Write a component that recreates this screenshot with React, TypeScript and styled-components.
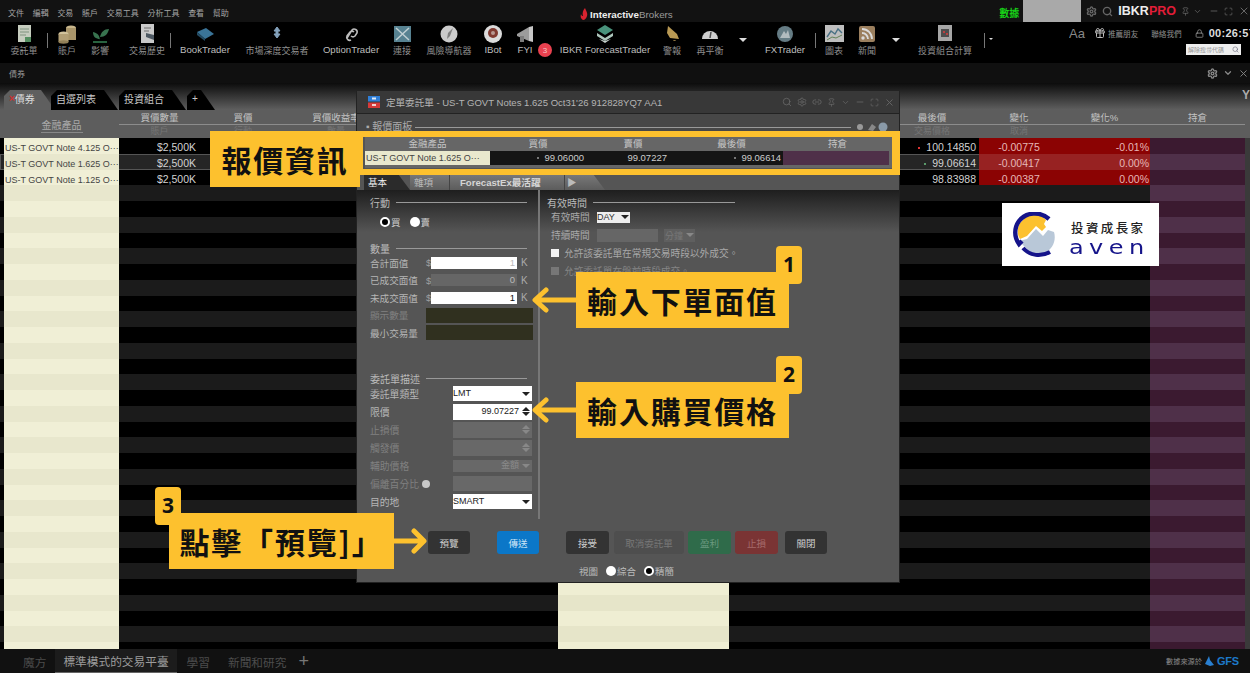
import React from "react";
import styled, { createGlobalStyle } from "styled-components";
import { ChevronDown, Gift, Link2, Lock, Maximize, Minus, Pin, Search, Settings, X } from "lucide-react";

const FONT = `"Liberation Sans", "Noto Sans CJK TC", sans-serif`;
const YELLOW = "#fdc12e";
const ROW_H = 15.75;
const ROW_COLS = "4px 115px 81px 358px 171px 171px 79px 86px 85px 95px 5px";

const Global = createGlobalStyle`
  html, body { margin: 0; padding: 0; background: #000; }
  * { box-sizing: border-box; }
`;

const Page = styled.div`
  position: relative; width: 1250px; height: 673px; overflow: hidden;
  display: flex; flex-direction: column; background: #000; color: #bbb;
  font-family: ${FONT}; font-size: 9px;
`;

/* ---------- top bar ---------- */
const TopBar = styled.header`
  height: 22px; flex: none; display: flex; align-items: center; background: #121212;
`;
const Menu = styled.nav`
  width: 580px; flex: none; display: flex; gap: 8.7px; padding-left: 8px; font-size: 8px; color: #a5a5a5; padding-top: 2px;
`;
const Brand = styled.div`
  display: flex; align-items: center; gap: 2px; font-size: 9.8px; padding-top: 6px; color: #9a9a9a;
  b { color: #eee; font-weight: 700; }
`;
const WinGroup = styled.div`
  margin-left: auto; height: 22px; display: flex; align-items: center; color: #666;
`;
const DataLabel = styled.span`
  color: #17d317; font-size: 10px; font-weight: 700; padding-top: 3px;
`;
const MaskBox = styled.div`
  width: 58px; height: 22px; background: #a9a9a9; margin: 0 5px 0 4px;
`;
const IbkrMark = styled.span`
  font-size: 12.5px; font-weight: 700; color: #eee; margin: 0 5px;
  i { font-style: normal; color: #e21d38; }
`;
const IconRow = styled.span<{ $gap: number; $ml?: number }>`
  display: inline-flex; align-items: center; gap: ${p => p.$gap}px; margin-left: ${p => p.$ml ?? 0}px;
`;

/* ---------- toolbar ---------- */
const ToolBar = styled.div`
  height: 41px; flex: none; display: flex; background: #000; position: relative;
`;
const Tool = styled.div<{ $w: number; $ml: number }>`
  width: ${p => p.$w}px; margin-left: ${p => p.$ml}px; flex: none;
  display: flex; flex-direction: column; align-items: center; height: 41px; padding-top: 2px;
`;
const ToolIcon = styled.div`
  height: 20px; display: flex; align-items: center; justify-content: center; filter: blur(.3px) brightness(.92);
`;
const ToolLabel = styled.span<{ $latin?: boolean }>`
  margin-top: ${p => (p.$latin ? 0 : 1)}px; white-space: nowrap; color: ${p => (p.$latin ? "#bdbdbd" : "#8f8f8f")};
  font-size: ${p => (p.$latin ? 9.6 : 9)}px; line-height: 12px;
`;
const ToolSep = styled.div<{ $ml: number }>`
  width: 1px; height: 15px; margin-left: ${p => p.$ml}px; margin-top: 11px; background: #777; flex: none;
`;
const Caret = styled.div<{ $ml: number; $s: number }>`
  margin-left: ${p => p.$ml}px; margin-top: 16px; flex: none; width: 0; height: 0;
  border-left: ${p => p.$s}px solid transparent; border-right: ${p => p.$s}px solid transparent;
  border-top: ${p => p.$s}px solid #ddd;
`;
const Badge = styled.div<{ $ml: number }>`
  width: 14px; height: 14px; border-radius: 50%; background: #e9414f; color: #f5c5c8; font-size: 8px; flex: none;
  display: flex; align-items: center; justify-content: center; margin-left: ${p => p.$ml}px; margin-top: 21px;
`;
const UserTools = styled.div`
  margin-left: auto; width: 181px; flex: none; display: flex; flex-direction: column; align-items: flex-start; overflow: hidden;
`;
const UserRow = styled.div`
  height: 22px; display: flex; align-items: center; white-space: nowrap; font-size: 7.6px; color: #8f8f8f;
`;
const AaMark = styled.span`
  font-size: 13px; color: #888; margin-right: 9px;
`;
const Clock = styled.span`
  font-size: 11px; font-weight: 700; color: #ddd; letter-spacing: .3px; margin-left: 5px;
`;
const Spaced = styled.span<{ $ml: number }>`
  margin-left: ${p => p.$ml}px; display: inline-flex; align-items: center;
`;
const SearchBox = styled.div`
  width: 55px; height: 11px; background: #eee; margin-left: 117px; margin-top: 0; display: flex; align-items: center;
  justify-content: space-between; padding: 0 2px; font-size: 6px; color: #999; overflow: hidden; white-space: nowrap;
`;

/* ---------- panel header ---------- */
const PanelBar = styled.div`
  height: 20px; flex: none; background: #101010; display: flex; align-items: center; padding: 0 1px 0 9px; color: #999; font-size: 8px;
  svg { color: #888; }
`;
const PanelTools = styled.div`
  margin-left: auto; display: flex; align-items: center; gap: 5px;
`;

/* ---------- tabs ---------- */
const TabStrip = styled.div`
  height: 27px; flex: none; display: flex; align-items: flex-end; padding-left: 4px; position: relative;
  background: linear-gradient(#0c0c0c 0%, #5f5f5f 100%);
`;
const Tab = styled.div<{ $w: number; $active?: boolean }>`
  width: ${p => p.$w}px; height: 20px; flex: none; margin-right: ${p => (p.$active ? -4 : 1)}px;
  background: ${p => (p.$active ? "#5f5f5f" : "#000")}; color: ${p => (p.$active ? "#ddd" : "#c8c8c8")};
  font-size: 10px; display: flex; align-items: center; padding-left: 5px; padding-bottom: 4px;
  clip-path: polygon(6px 0, calc(100% - 14px) 0, calc(100% - 9px) 35%, 100% 100%, 0 100%, 0 6px);
  b { color: #c33; font-size: 10px; font-weight: 700; }
`;
const CornerMark = styled.span`
  position: absolute; right: 0; top: 5px; font-size: 12px; font-weight: 700; color: #aaa;
`;

/* ---------- table ---------- */
const HeadGrid = styled.div`
  height: 28px; flex: none; background: #5d5d5d; display: grid;
  grid-template-columns: 4px 115px 81px 86px 100px 499px 94px 80px 91px 95px 5px;
  color: #c2c2c2; font-size: 9.5px;
`;
const HeadCell = styled.div<{ $col: number }>`
  grid-column: ${p => p.$col}; display: flex; flex-direction: column; text-align: center; padding-top: 1px;
`;
const HeadTop = styled.span`
  height: 14px; line-height: 13px; border-bottom: 1px solid #8c8c8c;
`;
const HeadSub = styled.span`
  height: 12px; line-height: 13px; color: #757575; font-size: 9px;
`;
const SymbolHead = styled.div`
  grid-column: 2; align-self: center; justify-self: center; color: #aaa; font-size: 10px; border-bottom: 1px solid #888; padding: 2px 1px 0;
`;
const Rows = styled.div`
  flex: none; height: 511px; overflow: hidden;
`;
const Row = styled.div<{ $even: boolean; $selected?: boolean }>`
  height: ${ROW_H}px; display: grid; grid-template-columns: ${ROW_COLS}; grid-template-rows: ${ROW_H}px;
  background: ${p => (p.$even ? "#000" : "#1b1b1b")}; font-size: 10.5px; color: #d2d2d2; line-height: ${ROW_H + 4}px;
  ${p => p.$selected && "box-shadow: inset 0 0 0 1px #555; background: #252525;"}
`;
const Cell = styled.div`
  min-width: 0; white-space: nowrap; overflow: hidden;
`;
const SymbolCell = styled(Cell)<{ $even: boolean }>`
  background: ${p => (p.$even ? "#f0efd6" : "#e8e7cd")}; color: #444; font-size: 9px; padding-left: 1px; line-height: ${ROW_H + 6}px;
`;
const CreamCell = styled(Cell)<{ $even: boolean }>`
  background: ${p => (p.$even ? "#efeed3" : "#e6e5c9")};
`;
const QtyCell = styled(Cell)`
  text-align: right; padding-right: 4px;
`;
const LastCell = styled(Cell)`
  padding-right: 3px; display: flex; justify-content: flex-end; align-items: flex-start; gap: 6px;
`;
const Dot = styled.i<{ $c: string }>`
  width: 2px; height: 2px; background: ${p => p.$c}; display: block; margin-top: 9px; flex: none;
`;
const ChangeCell = styled(Cell)<{ $on: boolean; $hi?: boolean; $alignRight?: boolean }>`
  background: ${p => (!p.$on ? "transparent" : p.$hi ? "#972222" : "#8b0303")}; color: #e6b7b7;
  text-align: ${p => (p.$alignRight ? "right" : "center")}; padding: ${p => (p.$alignRight ? "0 1px 0 0" : "0 6px 0 0")};
`;
const PosCell = styled(Cell)<{ $even: boolean }>`
  background: ${p => (p.$even ? "#3b1a30" : "#4f3049")};
`;
const ScrollCell = styled(Cell)`
  background: #3a3a3a;
`;

/* ---------- bottom bar ---------- */
const BottomBar = styled.footer`
  flex: 1; display: flex; align-items: center; background: #111; padding: 0 11px 0 15px; font-size: 11.7px; color: #4c4c4c;
`;
const BottomTab = styled.div<{ $active?: boolean; $mr?: number }>`
  height: 24px; display: flex; align-items: center; padding: 0 8px; margin-right: ${p => p.$mr ?? (p.$active ? 0 : 1)}px;
  color: ${p => (p.$active ? "#9c9c9c" : "#4c4c4c")};
  background: ${p => (p.$active ? "#1c1c1c" : "transparent")};
  border-bottom: ${p => (p.$active ? "1px solid #666" : "none")};
`;
const AddTab = styled.span`
  font-size: 18px; color: #777; font-weight: 300; margin-left: 3px; line-height: 18px;
`;
const Source = styled.div`
  margin-left: auto; display: flex; align-items: center; gap: 3px; font-size: 7.2px; color: #888;
`;
const Gfs = styled.span`
  color: #1d79c9; font-size: 11px; font-weight: 700; letter-spacing: -.2px;
`;

/* ---------- dialog ---------- */
const Dialog = styled.section`
  position: absolute; left: 357px; top: 91px; width: 542px; height: 491px; background: #555;
  display: flex; flex-direction: column; box-shadow: 0 0 0 1px #222; color: #aaa;
`;
const DialogTitle = styled.div`
  height: 23px; flex: none; background: #383838; display: flex; align-items: center; padding: 0 4px 0 11px;
  font-size: 9.55px; color: #b4b4b4; border-bottom: 1px solid #222;
`;
const TitleText = styled.span`
  margin-left: 6px;
`;
const TitleIcons = styled.div`
  margin-left: auto; display: flex; align-items: center; gap: 5px; color: #666;
`;
const QuoteHeading = styled.div`
  height: 23px; flex: none; background: #474747; display: flex; align-items: flex-start; gap: 3px; padding: 7px 10px 0 9px; font-size: 10px; line-height: 12px; color: #aaa;
`;
const HeadingRule = styled.i`
  flex: 1; height: 1px; background: #999; align-self: center;
`;
const HeadingLine = styled.i`
  flex: 1; height: 1px; background: #999; margin-top: 6px;
`;
const QuoteTable = styled.div`
  margin: 0 7px 0 8px; height: 31px; flex: none; background: #666;
  display: grid; grid-template-columns: 125px 96px 94px 103px 1fr; grid-template-rows: 14px 14px;
  font-size: 9.5px; color: #c5c5c5; padding-bottom: 3px;
`;
const QuoteHead = styled.div`
  text-align: center; line-height: 14px;
`;
const QuoteSymbol = styled.div`
  background: #e9e8cd; color: #444; font-size: 9px; line-height: 15px; white-space: nowrap; overflow: hidden; padding-left: 1px;
`;
const QuoteValue = styled.div<{ $pr: number }>`
  background: #151515; color: #ccc; line-height: 14px; font-size: 9.5px;
  display: flex; justify-content: flex-end; align-items: center; gap: 5px; padding-right: ${p => p.$pr}px;
`;
const QuoteDot = styled.i`
  width: 2px; height: 2px; background: #777; display: block;
`;
const QuotePos = styled.div`
  background: #4f3049; margin-right: 3px;
`;
const DialogTabs = styled.div`
  margin: 6px 0 0 7px; height: 16px; flex: none; display: flex; font-size: 9.5px;
`;
const DTab = styled.div<{ $w: number; $active?: boolean; $last?: boolean; $pl?: number }>`
  width: ${p => p.$w}px; height: 16px; flex: none; display: flex; align-items: center; padding-left: ${p => p.$pl ?? 4}px;
  color: ${p => (p.$active ? "#eee" : "#bbb")};
  background: ${p => (p.$active ? "#2b2b2b" : "linear-gradient(#7a7a7a,#5c5c5c)")};
  clip-path: ${p => (p.$active || p.$last ? "polygon(0 0, calc(100% - 12px) 0, 100% 100%, 0 100%)" : "none")};
  border-right: ${p => (p.$active || p.$last ? "none" : "1px solid #444")};
  strong { font-weight: 700; color: #d5d5d5; font-size: 9.6px; white-space: nowrap; }
`;
const Body = styled.div`
  height: 330px; flex: none; display: flex;
  background: linear-gradient(#1e1e1e 0, #555 42px);
`;
const LeftCol = styled.div`
  width: 183px; flex: none; padding: 6px 5px 0 13px; border-right: 2px solid #777;
  height: 329px;
`;
const RightCol = styled.div`
  flex: 1; padding: 6px 0 0 7px; display: flex; flex-direction: column;
`;
const Section = styled.div<{ $mt?: number; $w?: number }>`
  height: 12px; display: flex; align-items: center; gap: 6px; margin-top: ${p => p.$mt ?? 0}px; font-size: 10px; color: #bbb;
  width: ${p => (p.$w ? `${p.$w}px` : "auto")}; padding-right: 6px; white-space: nowrap;
`;
const RadioRow = styled.div`
  margin: 8px 0 14px 10px; height: 12px; display: flex; align-items: center; gap: 9px; font-size: 9.5px; color: #ccc;
`;
const RadioItem = styled.label`
  display: flex; align-items: center; gap: 1px;
`;
const Radio = styled.i<{ $on?: boolean }>`
  width: 10px; height: 10px; border-radius: 50%; background: ${p => (p.$on ? "#000" : "#fff")};
  border: ${p => (p.$on ? "2.5px solid #fff" : "none")}; display: block;
`;
const Field = styled.div`
  height: 17.5px; display: grid; grid-template-columns: 56px 5px 86px 1fr; align-items: center; font-size: 9.6px; color: #b5b5b5; white-space: nowrap;
`;
const Dim = styled.span`
  color: #808080;
`;
const AmountInput = styled.div<{ $dim?: boolean; $bold?: boolean }>`
  height: 12px; background: ${p => (p.$dim ? "#666" : "#fff")}; color: ${p => (p.$bold ? "#111" : "#bbb")};
  text-align: right; line-height: 12px; padding-right: 2px; font-size: 9.5px;
`;
const Unit = styled.span`
  padding-left: 4px; color: #aaa; font-size: 10px;
`;
const Currency = styled.span`
  color: #a0a0a0; font-size: 9.5px;
`;
const OliveField = styled.div`
  height: 15px; background: #30301f; grid-column: 2 / span 3;
`;
const OrderRow = styled.div`
  height: 18px; display: grid; grid-template-columns: 83px 79px; align-items: center; font-size: 9.8px; color: #b5b5b5; white-space: nowrap;
`;
const SelectBox = styled.div<{ $dim?: boolean; $h?: number }>`
  height: ${p => p.$h ?? 15}px; background: ${p => (p.$dim ? "#686868" : "#fff")}; color: ${p => (p.$dim ? "#8a8a8a" : "#222")};
  display: flex; align-items: center; justify-content: space-between; padding: 0 1px 0 0; font-size: 9px; line-height: 15px;
`;
const Tri = styled.i<{ $up?: boolean; $dim?: boolean }>`
  width: 0; height: 0; display: block; border-left: 4px solid transparent; border-right: 4px solid transparent;
  ${p => (p.$up ? "border-bottom" : "border-top")}: 4px solid ${p => (p.$dim ? "#888" : "#222")};
  margin-right: 1px;
`;
const Spin = styled.span`
  display: flex; flex-direction: column; gap: 1px;
`;
const Right = styled.span`
  margin-left: auto; padding-right: 3px;
`;
const OffsetLabel = styled.span`
  display: flex; align-items: center; gap: 3px;
`;
const SmallDot = styled.i`
  width: 8px; height: 8px; border-radius: 50%; background: #c8c8c8; display: block;
`;
const TifRow = styled.div`
  height: 18px; display: flex; align-items: center; padding-left: 4px; font-size: 9.7px; color: #a8a8a8; white-space: nowrap;
`;
const TifLabel = styled.span`
  width: 46px; flex: none;
`;
const DaySelect = styled.div`
  width: 33px; height: 11px; background: #eee; color: #333; display: flex; align-items: center; justify-content: space-between; font-size: 9px;
`;
const DurationInput = styled.div`
  width: 61px; height: 13px; background: #666;
`;
const DurationUnit = styled.div`
  width: 31px; height: 13px; margin-left: 6px; background: #5f5f5f; color: #777; display: flex; align-items: center; justify-content: space-between; padding-left: 1px; font-size: 9px;
`;
const CheckRow = styled.div<{ $dim?: boolean }>`
  height: 18px; display: flex; align-items: center; gap: 5px; padding-left: 4px; font-size: 9.7px;
  color: ${p => (p.$dim ? "#858585" : "#a8a8a8")}; white-space: nowrap;
`;
const Check = styled.i<{ $dim?: boolean }>`
  width: 8px; height: 8px; background: ${p => (p.$dim ? "#777" : "#f3f3f3")}; display: block;
`;
const ButtonRow = styled.div`
  margin-top: 11px; height: 23px; flex: none; display: flex; padding-left: 71px;
`;
const Btn = styled.div<{ $w: number; $ml?: number; $bg: string; $fg: string }>`
  width: ${p => p.$w}px; margin-left: ${p => p.$ml ?? 0}px; height: 23px; flex: none; border-radius: 3px;
  background: ${p => p.$bg}; color: ${p => p.$fg}; display: flex; align-items: center; justify-content: center;
  font-size: 9.5px; white-space: nowrap;
`;
const ViewRow = styled.div`
  margin-top: 10px; height: 14px; display: flex; align-items: center; padding-left: 222px; gap: 8px; font-size: 9.5px; color: #bbb;
`;

/* ---------- annotations ---------- */
const Callout = styled.div<{ $w: number }>`
  width: ${p => p.$w}px; height: 56px; flex: none; background: ${YELLOW}; color: #111;
  display: flex; align-items: center; justify-content: center; font-size: 30px; font-weight: 700; letter-spacing: 1.8px;
  white-space: nowrap; font-family: "Noto Sans CJK TC", sans-serif;
`;
const Annotation = styled.div<{ $x: number; $y: number }>`
  position: absolute; left: ${p => p.$x}px; top: ${p => p.$y}px; display: flex; align-items: center; z-index: 3;
`;
const StepBadge = styled.div<{ $x: number }>`
  position: absolute; left: ${p => p.$x}px; top: -26px; width: 26px; height: 38px; border-radius: 4px; background: ${YELLOW};
  color: #111; font-size: 21px; font-weight: 700; display: flex; justify-content: center; padding-top: 3px; z-index: -1;
  font-family: "Noto Sans", sans-serif; line-height: 30px;
`;
const QuoteFrame = styled.div`
  position: absolute; left: 360px; top: 131px; width: 540px; height: 44px; z-index: 2;
  border: 6px solid ${YELLOW}; border-left-width: 3px; border-right-width: 8px;
`;
const LogoCard = styled.div`
  position: absolute; left: 1002px; top: 203px; width: 157px; height: 63px; background: #fff; z-index: 2;
  display: flex; align-items: center; padding-left: 11px; gap: 14px;
`;
const LogoText = styled.div`
  display: flex; flex-direction: column; padding-top: 7px;
`;
const LogoCn = styled.span`
  font-size: 12.5px; letter-spacing: 2.4px; color: #222; font-weight: 500; line-height: 15px; white-space: nowrap; font-family: "Noto Sans CJK TC", sans-serif;
`;
const LogoEn = styled.span`
  font-family: "DejaVu Sans", sans-serif; font-size: 20px; letter-spacing: 4.5px; line-height: 18px; margin-top: 3px; color: #15148a;
  transform: scaleX(1.2); transform-origin: left center; font-weight: 400; margin-left: -2px;
`;

/* ---------- icons ---------- */
const icons: Record<string, React.ReactNode> = {
  order: <><rect x="4" y="1" width="13" height="17" fill="#d7dfd0" /><path d="M6 5h9M6 8h9M6 11h6" stroke="#8aa08a" /><rect x="11" y="13" width="6" height="5" fill="#5c9c6a" /></>,
  account: <><ellipse cx="14" cy="4" rx="5" ry="2.5" fill="#d9c698" /><rect x="9" y="4" width="10" height="12" fill="#b8a273" /><ellipse cx="6.5" cy="10" rx="5" ry="2.5" fill="#e3d3a9" /><rect x="1.5" y="10" width="10" height="8" fill="#c2ad7f" /><ellipse cx="6.5" cy="18" rx="5" ry="1.7" fill="#a08c60" /></>,
  impact: <><path d="M10 17C10 12 8 9 3 8c0 5 3 7 7 7M10 13c1-5 4-8 9-8-1 5-4 8-9 8z" fill="#3d7d56" /><path d="M3 18h14" stroke="#2b6a45" strokeWidth="2" /></>,
  history: <><path d="M4 0h13v19H4z" fill="#dadada" /><path d="M7 4h7M7 7h5" stroke="#777" /><path d="M9 9l8 2v5l-8-3z" fill="#54606a" /></>,
  book: <><path d="M2 8l9-4 8 6-9 5z" fill="#3f7ea5" /><path d="M2 8v3l8 6v-2z" fill="#26516c" /></>,
  depth: <path d="M10 3l3 4h-2v3h2l-3 4-3-4h2V7H7z" fill="#8fb0cc" stroke="#8fb0cc" />,
  option: <path d="M6 14l5-8a3 3 0 0 1 5 3l-2 3a3 3 0 0 1-4 0M13 8a3 3 0 0 0-4 0l-3 4a3 3 0 0 0 4 4" fill="none" stroke="#ccc" strokeWidth="1.6" />,
  connect: <><rect x="2" y="2" width="17" height="16" fill="#5f8d9e" /><path d="M4 4l13 12M17 4L4 16" stroke="#d1e2e6" strokeWidth="1.5" /></>,
  risk: <><circle cx="10" cy="10" r="8.5" fill="#ddd" /><path d="M14 4l-3 8-3 3 1-6z" fill="#8a8a8a" /></>,
  ibot: <><circle cx="10" cy="10" r="9" fill="#eee" /><circle cx="10" cy="9" r="5" fill="#8b3e34" /><circle cx="10" cy="9" r="2" fill="#c8a49c" /></>,
  fyi: <><path d="M2 10l12-7v14L2 12z" fill="#aaa" /><path d="M14 3l4-1v16l-4-1z" fill="#d8d8d8" /><rect x="5" y="12" width="4" height="6" fill="#888" /></>,
  forecast: <><path d="M10 1l8 5-8 5-8-5z" fill="#4fa087" /><path d="M2 9l8 5 8-5v3l-8 5-8-5z" fill="#bcd7cc" /><path d="M4 15l6 4 6-4-6 2z" fill="#d8e4de" /></>,
  alert: <path d="M6 2l9 8 2 5-9-1-3-5zM11 16a2 2 0 0 0 3 0z" fill="#c9a65b" />,
  rebalance: <><path d="M2 15a8 8 0 0 1 16 0z" fill="#e0e0e0" /><path d="M10 14l1-6" stroke="#555" strokeWidth="1.5" /></>,
  fx: <><circle cx="10" cy="10" r="8" fill="#6e8790" /><path d="M5 14l4-7 2 3 2-4 2 8z" fill="#c2ccd0" /></>,
  chart: <><rect x="1" y="1" width="19" height="17" fill="#cfcfcf" /><path d="M3 13l4-6 4 3 3-5 4 4" fill="none" stroke="#4e7a8f" strokeWidth="1.4" /><path d="M3 16l5-3 4 1 6-3" fill="none" stroke="#6b8c5e" /></>,
  news: <><rect x="2" y="2" width="16" height="16" rx="2" fill="#a98a66" /><circle cx="6" cy="14" r="1.7" fill="#eee" /><path d="M5 9a6 6 0 0 1 6 6M5 5a10 10 0 0 1 10 10" fill="none" stroke="#eee" strokeWidth="1.8" /></>,
  calc: <><rect x="3" y="1" width="14" height="16" fill="#b4b4b4" /><rect x="6" y="5" width="8" height="8" fill="#555" /><path d="M8 7h2v2H8zM11 9h2v2h-2z" fill="#c44" /></>,
};
const ToolGlyph = ({ name }: { name: string }) => (
  <svg width="20" height="20" viewBox="0 0 20 20">{icons[name]}</svg>
);

const Flag = () => (
  <svg width="12" height="12" viewBox="0 0 12 12">
    <rect width="12" height="5.5" fill="#2f7fd8" /><rect y="6.5" width="12" height="5.5" fill="#d63a3a" />
    <rect x="4" y="1.5" width="4" height="2" fill="#dfe9f5" /><rect x="4" y="8" width="4" height="2" fill="#f2d3d3" />
  </svg>
);
const PanelGlyphs = () => (
  <svg width="35" height="12" viewBox="0 0 35 12">
    <circle cx="6" cy="6" r="3" fill="#999" /><path d="M14 9l4-6 4 3-3 4z" fill="#888" /><circle cx="29" cy="6" r="4.5" fill="#8a9aa8" />
  </svg>
);
const ArrowMark = ({ w, dir }: { w: number; dir: "left" | "right" }) => {
  const d = dir === "left"
    ? `M${w} 14H5M15 4L4 14l11 10`
    : `M0 14H${w - 4}M${w - 13} 4L${w - 3} 14L${w - 13} 24`;
  return (
    <svg width={w} height="28" viewBox={`0 0 ${w} 28`}>
      <path d={d} fill="none" stroke={YELLOW} strokeWidth="5" strokeLinecap="round" strokeLinejoin="round" />
    </svg>
  );
};
const LogoGlyph = () => (
  <svg width="44" height="46" viewBox="0 0 44 46">
    <path d="M7 11L13 5c7-4 15-3 20 3l-2 4 2 3-4 4-6-5-9 10-7 3C4 23 4 16 7 11z" fill="#fcc12f" />
    <path d="M6 29l8-2 9-10 7 7 5-6 6 2c2 7 0 14-6 19-6 4-13 4-18 1z" fill="#b9c8d8" />
    <path d="M36 7C27-1 13 0 6 9c-5 7-5 16 0 23l3-3" fill="none" stroke="#15148a" strokeWidth="4.4" />
    <path d="M10 36c7 8 18 9 27 4" fill="none" stroke="#15148a" strokeWidth="4" />
  </svg>
);
const Flame = () => (
  <svg width="8" height="12" viewBox="0 0 8 12"><path d="M5 0C6 3 8 5 7 8c-.5 2-2 4-4 4C1 11 0 9 1 6c.5 2 1.5 2 2 2C2 5 3 2 5 0z" fill="#d8232f" /></svg>
);

/* ---------- data ---------- */
type ToolDef = { kind: "tool"; label: string; icon: string; c: number; w: number; latin?: boolean } | { kind: "sep"; c: number } | { kind: "caret"; c: number; s: number } | { kind: "badge"; c: number };
const TOOLS: ToolDef[] = [
  { kind: "tool", label: "委託單", icon: "order", c: 24, w: 30 },
  { kind: "sep", c: 47 },
  { kind: "tool", label: "賬戶", icon: "account", c: 67, w: 24 },
  { kind: "tool", label: "影響", icon: "impact", c: 100, w: 24 },
  { kind: "tool", label: "交易歷史", icon: "history", c: 147, w: 40 },
  { kind: "sep", c: 170 },
  { kind: "tool", label: "BookTrader", icon: "book", c: 205, w: 52, latin: true },
  { kind: "tool", label: "市場深度交易者", icon: "depth", c: 277, w: 66 },
  { kind: "tool", label: "OptionTrader", icon: "option", c: 351, w: 60, latin: true },
  { kind: "tool", label: "連接", icon: "connect", c: 402, w: 24 },
  { kind: "tool", label: "風險導航器", icon: "risk", c: 449, w: 48 },
  { kind: "tool", label: "IBot", icon: "ibot", c: 493, w: 22, latin: true },
  { kind: "tool", label: "FYI", icon: "fyi", c: 525, w: 22, latin: true },
  { kind: "badge", c: 545 },
  { kind: "tool", label: "IBKR ForecastTrader", icon: "forecast", c: 605, w: 92, latin: true },
  { kind: "tool", label: "警報", icon: "alert", c: 672, w: 24 },
  { kind: "tool", label: "再平衡", icon: "rebalance", c: 710, w: 30 },
  { kind: "caret", c: 743, s: 4 },
  { kind: "tool", label: "FXTrader", icon: "fx", c: 785, w: 44, latin: true },
  { kind: "sep", c: 815 },
  { kind: "tool", label: "圖表", icon: "chart", c: 834, w: 24 },
  { kind: "tool", label: "新聞", icon: "news", c: 867, w: 24 },
  { kind: "caret", c: 896, s: 4 },
  { kind: "tool", label: "投資組合計算", icon: "calc", c: 945, w: 58 },
  { kind: "sep", c: 984 },
  { kind: "caret", c: 991, s: 2 },
];
const extent = (t: ToolDef) => (t.kind === "tool" ? t.w : t.kind === "sep" ? 1 : t.kind === "caret" ? t.s * 2 : 14);
const placedTools = TOOLS.reduce<{ t: ToolDef; ml: number; right: number }[]>((acc, t) => {
  const prevRight = acc.length ? acc[acc.length - 1].right : 0;
  const left = t.c - extent(t) / 2;
  acc.push({ t, ml: left - prevRight, right: left + extent(t) });
  return acc;
}, []);

const ROWS = [
  { name: "US-T GOVT Note 4.125 O···", qty: "$2,500K", last: "100.14850", dot: "#d33", chg: "-0.00775", pct: "-0.01%" },
  { name: "US-T GOVT Note 1.625 O···", qty: "$2,500K", last: "99.06614", dot: "#5a9a6a", chg: "-0.00417", pct: "0.00%" },
  { name: "US-T GOVT Note 1.125 O···", qty: "$2,500K", last: "98.83988", dot: "", chg: "-0.00387", pct: "0.00%" },
];
const ROW_COUNT = 33;

export default function App() {
  return (
    <Page>
      <Global />
      <TopBar>
        <Menu>
          {["文件", "編輯", "交易", "賬戶", "交易工具", "分析工具", "查看", "幫助"].map(m => <span key={m}>{m}</span>)}
        </Menu>
        <Brand><Flame /><span><b>Interactive</b>Brokers</span></Brand>
        <WinGroup>
          <DataLabel>數據</DataLabel>
          <MaskBox />
          <IconRow $gap={5}><Settings size={11} strokeWidth={3} /><Search size={11} strokeWidth={3} /></IconRow>
          <IbkrMark>IBKR<i>PRO</i></IbkrMark>
          <IconRow $gap={3}><Pin size={9} /><ChevronDown size={9} /></IconRow>
          <IconRow $gap={5} $ml={7}><Minus size={10} /><Maximize size={9} /><X size={12} /></IconRow>
        </WinGroup>
      </TopBar>

      <ToolBar>
        {placedTools.map(({ t, ml }, i) => {
          if (t.kind === "sep") return <ToolSep key={i} $ml={ml} />;
          if (t.kind === "caret") return <Caret key={i} $ml={ml} $s={t.s} />;
          if (t.kind === "badge") return <Badge key={i} $ml={ml}>3</Badge>;
          return (
            <Tool key={i} $w={t.w} $ml={ml}>
              <ToolIcon><ToolGlyph name={t.icon} /></ToolIcon>
              <ToolLabel $latin={t.latin}>{t.label}</ToolLabel>
            </Tool>
          );
        })}
        <UserTools>
          <UserRow>
            <AaMark>Aa</AaMark>
            <Gift size={12} color="#bbb" />
            <Spaced $ml={2}>推薦朋友</Spaced>
            <Spaced $ml={13}>聯絡我們</Spaced>
            <Spaced $ml={13}><Lock size={9} color="#999" /></Spaced>
            <Clock>00:26:57</Clock>
          </UserRow>
          <SearchBox>解除搜尋代碼<Search size={7} color="#667" /></SearchBox>
        </UserTools>
      </ToolBar>

      <PanelBar>
        債券
        <PanelTools><Settings size={11} strokeWidth={3} /><ChevronDown size={10} strokeWidth={3} /><X size={11} /></PanelTools>
      </PanelBar>

      <TabStrip>
        <Tab $w={51} $active><b>×</b>債券</Tab>
        <Tab $w={67}>自選列表</Tab>
        <Tab $w={67}>投資組合</Tab>
        <Tab $w={28}>+</Tab>
        <CornerMark>Y</CornerMark>
      </TabStrip>

      <HeadGrid>
        <SymbolHead>金融產品</SymbolHead>
        <HeadCell $col={3}><HeadTop>買價數量</HeadTop><HeadSub>賬戶</HeadSub></HeadCell>
        <HeadCell $col={4}><HeadTop>買價</HeadTop><HeadSub>行動</HeadSub></HeadCell>
        <HeadCell $col={5}><HeadTop>買價收益率</HeadTop><HeadSub>數量</HeadSub></HeadCell>
        <HeadCell $col={7}><HeadTop>最後價</HeadTop><HeadSub>交易價格</HeadSub></HeadCell>
        <HeadCell $col={8}><HeadTop>變化</HeadTop><HeadSub>取消</HeadSub></HeadCell>
        <HeadCell $col={9}><HeadTop>變化%</HeadTop><HeadSub /></HeadCell>
        <HeadCell $col={10}><HeadTop>持倉</HeadTop><HeadSub /></HeadCell>
      </HeadGrid>

      <Rows>
        {Array.from({ length: ROW_COUNT }, (_, i) => {
          const d = ROWS[i];
          const even = i % 2 === 0;
          return (
            <Row key={i} $even={even} $selected={i === 1}>
              <Cell />
              <SymbolCell $even={even}>{d?.name}</SymbolCell>
              <QtyCell>{d?.qty}</QtyCell>
              <Cell />
              <CreamCell $even={even} />
              <Cell />
              <LastCell>{d?.dot && <Dot $c={d.dot} />}{d?.last}</LastCell>
              <ChangeCell $on={!!d} $hi={i === 1}>{d?.chg}</ChangeCell>
              <ChangeCell $on={!!d} $hi={i === 1} $alignRight>{d?.pct}</ChangeCell>
              <PosCell $even={even} />
              <ScrollCell />
            </Row>
          );
        })}
      </Rows>

      <BottomBar>
        <BottomTab>魔方</BottomTab>
        <BottomTab $active $mr={2}>標準模式的交易平臺</BottomTab>
        <BottomTab $mr={2}>學習</BottomTab>
        <BottomTab>新聞和研究</BottomTab>
        <AddTab>+</AddTab>
        <Source>
          數據來源於
          <svg width="9" height="10" viewBox="0 0 9 10"><path d="M0 8l4-8 1 4 4 5-4 1z" fill="#2a7fd0" /></svg>
          <Gfs>GFS</Gfs>
        </Source>
      </BottomBar>

      <Dialog>
        <DialogTitle>
          <Flag />
          <TitleText>定單委託單 - US-T GOVT Notes 1.625 Oct31'26 912828YQ7 AA1</TitleText>
          <TitleIcons>
            <Search size={10} /><Settings size={10} /><Link2 size={10} /><Pin size={9} /><ChevronDown size={9} />
            <Minus size={10} /><Maximize size={9} /><X size={11} />
          </TitleIcons>
        </DialogTitle>
        <QuoteHeading>▪ 報價面板<HeadingLine /><PanelGlyphs /></QuoteHeading>
        <QuoteTable>
          <QuoteHead>金融產品</QuoteHead><QuoteHead>買價</QuoteHead><QuoteHead>賣價</QuoteHead><QuoteHead>最後價</QuoteHead><QuoteHead>持倉</QuoteHead>
          <QuoteSymbol>US-T GOVT Note 1.625 O···</QuoteSymbol>
          <QuoteValue $pr={2}><QuoteDot />99.06000</QuoteValue>
          <QuoteValue $pr={13}>99.07227</QuoteValue>
          <QuoteValue $pr={2}><QuoteDot />99.06614</QuoteValue>
          <QuotePos />
        </QuoteTable>
        <DialogTabs>
          <DTab $w={46} $active>基本</DTab>
          <DTab $w={40}><span>雜項</span></DTab>
          <DTab $w={115} $pl={10}><strong>ForecastEx最活躍</strong></DTab>
          <DTab $w={40} $last $pl={2}>▶</DTab>
        </DialogTabs>
        <Body>
          <LeftCol>
            <Section>行動<HeadingRule /></Section>
            <RadioRow>
              <RadioItem><Radio $on />買</RadioItem>
              <RadioItem><Radio />賣</RadioItem>
            </RadioRow>
            <Section>數量<HeadingRule /></Section>
            <Field><span>合計面值</span><Currency>$</Currency><AmountInput>1</AmountInput><Unit>K</Unit></Field>
            <Field><span>已成交面值</span><Currency>$</Currency><AmountInput $dim>0</AmountInput><Unit>K</Unit></Field>
            <Field><span>未成交面值</span><Currency>$</Currency><AmountInput $bold>1</AmountInput><Unit>K</Unit></Field>
            <Field><Dim>顯示數量</Dim><OliveField /></Field>
            <Field><span>最小交易量</span><OliveField /></Field>
            <Section $mt={31}>委託單描述<HeadingRule /></Section>
            <OrderRow><span>委託單類型</span><SelectBox>LMT<Tri /></SelectBox></OrderRow>
            <OrderRow><span>限價</span><SelectBox $h={16}><Right>99.07227</Right><Spin><Tri $up /><Tri /></Spin></SelectBox></OrderRow>
            <OrderRow><Dim>止損價</Dim><SelectBox $dim $h={16}><Right /><Spin><Tri $up $dim /><Tri $dim /></Spin></SelectBox></OrderRow>
            <OrderRow><Dim>觸發價</Dim><SelectBox $dim $h={16}><Right /><Spin><Tri $up $dim /><Tri $dim /></Spin></SelectBox></OrderRow>
            <OrderRow><Dim>輔助價格</Dim><SelectBox $dim $h={12}><Right>金額</Right><Tri $dim /></SelectBox></OrderRow>
            <OrderRow><OffsetLabel><Dim>偏離百分比</Dim><SmallDot /></OffsetLabel><SelectBox $dim $h={15} /></OrderRow>
            <OrderRow><span>目的地</span><SelectBox>SMART<Tri /></SelectBox></OrderRow>
          </LeftCol>
          <RightCol>
            <Section $w={194}>有效時間<HeadingRule /></Section>
            <TifRow><TifLabel>有效時間</TifLabel><DaySelect>DAY<Tri /></DaySelect></TifRow>
            <TifRow><TifLabel>持續時間</TifLabel><DurationInput /><DurationUnit>分鐘<Tri $dim /></DurationUnit></TifRow>
            <CheckRow><Check />允許該委託單在常規交易時段以外成交。</CheckRow>
            <CheckRow $dim><Check $dim />允許委託單在盤前時段成交。</CheckRow>
          </RightCol>
        </Body>
        <ButtonRow>
          <Btn $w={42} $bg="#333" $fg="#ccc">預覽</Btn>
          <Btn $w={42} $ml={27} $bg="#0b77c8" $fg="#cfe6f7">傳送</Btn>
          <Btn $w={43} $ml={27} $bg="#333" $fg="#ccc">接受</Btn>
          <Btn $w={70} $ml={5} $bg="#4e4e4e" $fg="#777">取消委託單</Btn>
          <Btn $w={43} $ml={4} $bg="#2f6b4a" $fg="#6c9a80">盈利</Btn>
          <Btn $w={43} $ml={4} $bg="#7a3434" $fg="#a56b6b">止損</Btn>
          <Btn $w={42} $ml={7} $bg="#333" $fg="#ccc">關閉</Btn>
        </ButtonRow>
        <ViewRow>
          <span>視圖</span>
          <RadioItem><Radio />綜合</RadioItem>
          <RadioItem><Radio $on />精簡</RadioItem>
        </ViewRow>
      </Dialog>

      <QuoteFrame />
      <Annotation $x={210} $y={131}><Callout $w={150}>報價資訊</Callout></Annotation>
      <Annotation $x={531} $y={272}>
        <ArrowMark w={45} dir="left" />
        <Callout $w={213}>輸入下單面值</Callout>
        <StepBadge $x={245}>1</StepBadge>
      </Annotation>
      <Annotation $x={531} $y={382}>
        <ArrowMark w={45} dir="left" />
        <Callout $w={213}>輸入購買價格</Callout>
        <StepBadge $x={245}>2</StepBadge>
      </Annotation>
      <Annotation $x={169} $y={513}>
        <Callout $w={225}>點擊「預覽]」</Callout>
        <ArrowMark w={33} dir="right" />
        <StepBadge $x={-14}>3</StepBadge>
      </Annotation>
      <LogoCard>
        <LogoGlyph />
        <LogoText><LogoCn>投資成長家</LogoCn><LogoEn>aven</LogoEn></LogoText>
      </LogoCard>
    </Page>
  );
}
